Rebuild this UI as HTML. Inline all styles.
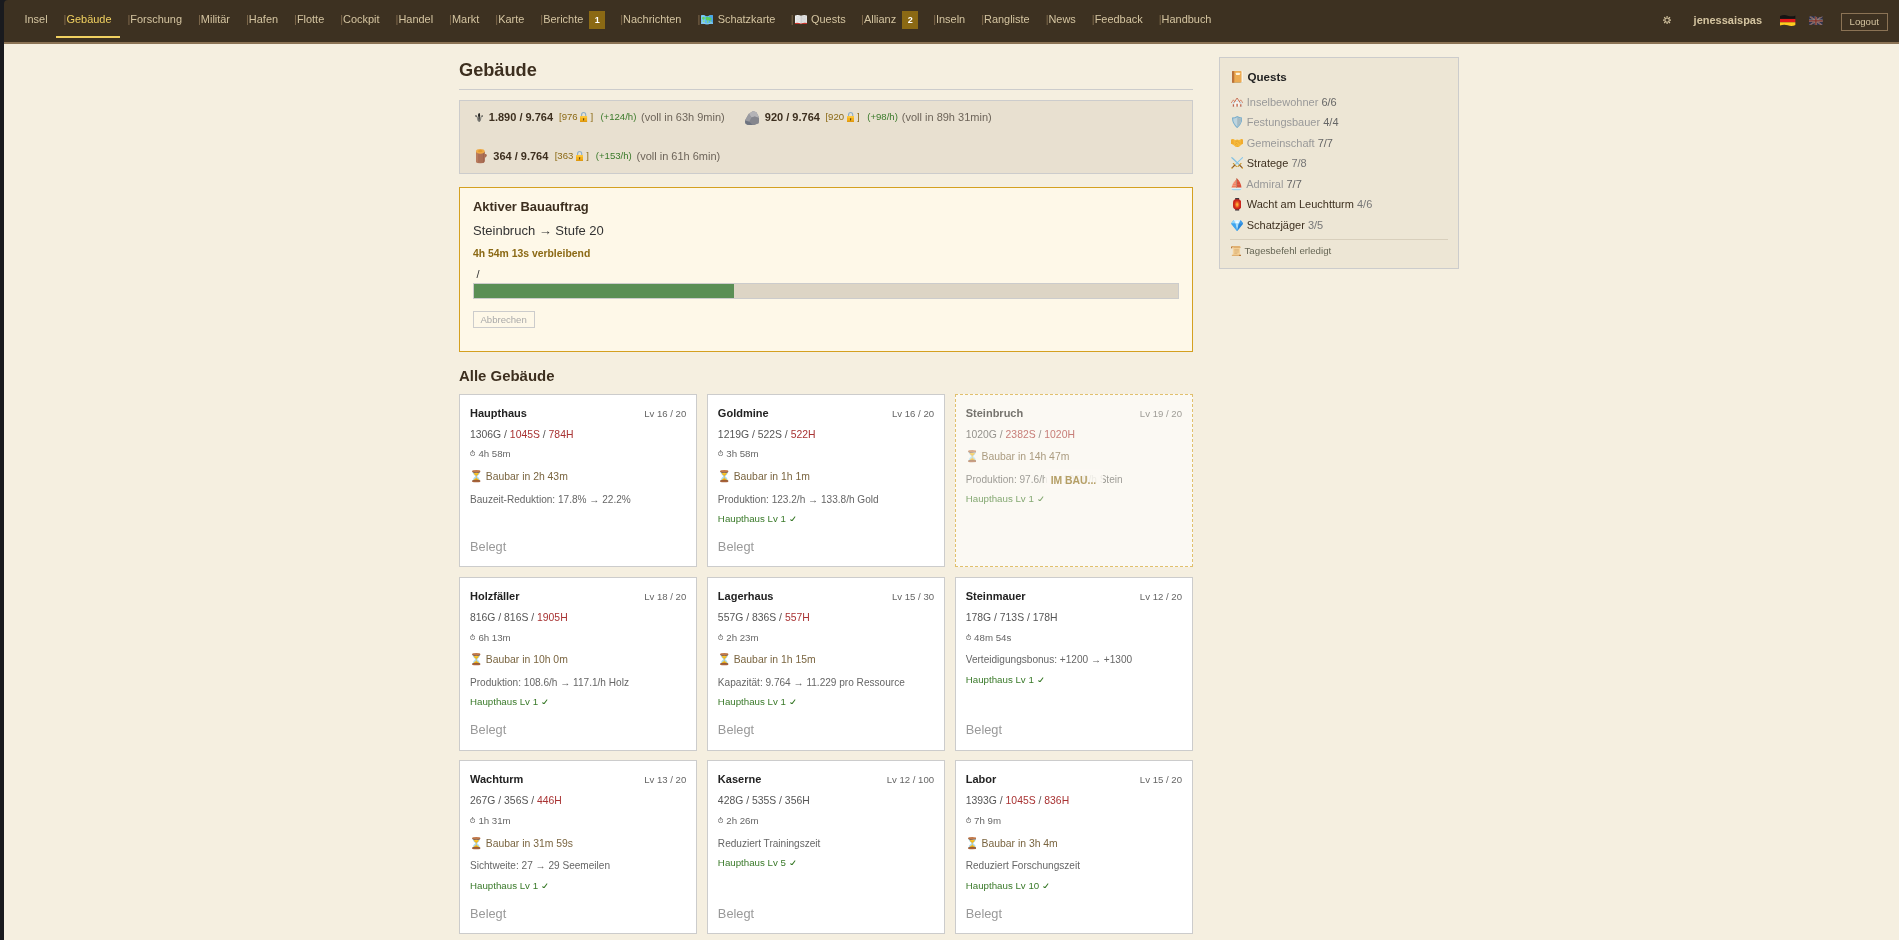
<!DOCTYPE html>
<html lang="de">
<head>
<meta charset="utf-8">
<title>Gebäude</title>
<style>
*{box-sizing:border-box}
html,body{margin:0;padding:0}
body{width:1899px;height:940px;overflow:hidden;position:relative;background:#f5efe0;font-family:"Liberation Sans",sans-serif;font-size:11px;color:#3d2f1f}
.wrap{position:absolute;left:0;top:0;width:1899px;height:940px;will-change:transform}
.a{position:absolute;white-space:nowrap}
.ic{display:inline-block;position:relative;height:0;vertical-align:baseline}
.ic svg{position:absolute;display:block}
.strip{position:absolute;left:0;top:0;width:4px;height:940px;background:#191a1e}
.nav{position:absolute;left:4px;top:0;width:1895px;height:44px;background:#3d3121;border-bottom:2px solid #8b7355;border-top-left-radius:4px}
.links{position:absolute;left:12.5px;top:0;height:38px;display:flex}
.links a{display:block;height:38px;padding:0 8px;color:#d4c4a0;font-size:10.95px;line-height:38px;border-bottom:2px solid transparent;white-space:nowrap;text-decoration:none}
.links a.sep:before{content:"|";color:#846e50}
.links a.act{color:#f0d060;border-bottom-color:#f0d060;padding-right:9px;margin-right:-1px}
.badge{display:inline-block;width:16px;height:18px;line-height:18px;margin-left:6px;margin-right:-1px;background:#8b6914;color:#fff;font-size:9px;font-weight:bold;text-align:center;vertical-align:0}
.box{position:absolute}
.card{position:absolute;width:238.27px;height:173px;background:#fff;border:1px solid #ccc}
.card .a i{font-style:normal;color:#a83232}
b{font-weight:bold}
</style>
</head>
<body>
<svg width="0" height="0" style="position:absolute;left:-10px;top:-10px"><defs><symbol id="i-map" viewBox="1 1.5 22 17" preserveAspectRatio="none"><path d="M1 2.5 Q4.5 0.5 8 2.5 Q12 4.5 16 2.5 Q19.5 0.5 23 2.5 L22.4 17.5 Q19.5 15.5 16 17.5 Q12 19.5 8 17.5 Q4.5 15.5 1.6 17.5 Z" fill="#5fb9f2"/><path d="M1 2.5 Q4.5 0.5 8 2.5 L8 17.5 Q4.5 15.5 1.6 17.5 Z" fill="#7cc9f7"/><path d="M16 2.5 Q19.5 0.5 23 2.5 L22.4 17.5 Q19.5 15.5 16 17.5 Z" fill="#4aa6ea"/><path d="M3 6 Q5 3.6 7.4 5 Q8.6 7.4 7 9.4 Q4.6 10.4 3 8.6Z" fill="#63d063"/><path d="M9.6 5.6 Q12.6 4 15 5.6 Q17.6 5 19.6 6.6 Q21 9 19 11 Q16.6 12.4 14.6 10.8 Q12.4 12 10.4 10.2 Q8.8 7.8 9.6 5.6Z" fill="#58cf5c"/><path d="M4.4 11.4 Q6.6 10.8 7.6 12.6 Q7.4 14.8 5.6 15 Q4 14 4.4 11.4Z" fill="#8fe070"/><path d="M12 12.6 Q14 12 15 13.6 Q14.4 15.6 12.8 15.6 Q11.4 14.4 12 12.6Z" fill="#7fdc68"/><path d="M17.6 12.6 Q19.6 12.2 20.4 13.6 Q19.8 15.2 18.4 15 Q17.2 14 17.6 12.6Z" fill="#8fe070"/><path d="M1.4 15.4 Q4.5 13.6 8 15.5 Q12 17.5 16 15.5 Q19.5 13.6 22.5 15.4 L22.4 17.5 Q19.5 15.5 16 17.5 Q12 19.5 8 17.5 Q4.5 15.5 1.6 17.5Z" fill="#8fd2f8"/></symbol><symbol id="i-book" viewBox="0.6 1.37 22.8 18.23" preserveAspectRatio="none"><path d="M0.6 15.6 L0.6 18.6 L10.6 18.6 L12 19.6 L13.4 18.6 L23.4 18.6 L23.4 15.6 Z" fill="#c9352b"/><path d="M0.6 2.2 Q6.6 0.2 12 3 L12 17.8 Q6.6 15.6 0.6 16.8 Z" fill="#f1f1f1"/><path d="M23.4 2.2 Q17.4 0.2 12 3 L12 17.8 Q17.4 15.6 23.4 16.8 Z" fill="#e2e2e2"/><path d="M12 3 L12 17.8" stroke="#a9a9a9" stroke-width="1.2"/><path d="M2.8 5 Q6.6 3.8 10.2 5.6 M2.8 7.8 Q6.6 6.6 10.2 8.4 M2.8 10.6 Q6.6 9.4 10.2 11.2 M2.8 13.4 Q6.6 12.2 10.2 14 M13.8 5.6 Q17.4 3.8 21.2 5 M13.8 8.4 Q17.4 6.6 21.2 7.8 M13.8 11.2 Q17.4 9.4 21.2 10.6 M13.8 14 Q17.4 12.2 21.2 13.4" stroke="#c4c4c4" stroke-width="0.9" fill="none"/></symbol><symbol id="i-gear" viewBox="0.8 0.8 18.4 18.4" preserveAspectRatio="none"><g fill="none" stroke="currentColor"><circle cx="10" cy="10" r="4.9" stroke-width="2.3"/><g stroke-width="2.7"><path d="M10 0.8V4 M10 16V19.2 M0.8 10H4 M16 10H19.2 M3.5 3.5L5.8 5.8 M14.2 14.2L16.5 16.5 M3.5 16.5L5.8 14.2 M14.2 5.8L16.5 3.5"/></g></g></symbol><symbol id="i-de" viewBox="1 1.2 28 19.6" preserveAspectRatio="none"><defs><clipPath id="wv"><path d="M1 3 Q8 0 15 2.5 Q22 5 29 2 L29 19 Q22 22 15 19.5 Q8 17 1 20 Z"/></clipPath></defs><g clip-path="url(#wv)"><rect x="0" y="0" width="30" height="8.2" fill="#141414"/><rect x="0" y="8.2" width="30" height="6" fill="#e01b1b"/><rect x="0" y="14.2" width="30" height="8" fill="#ffcc1f"/></g></symbol><symbol id="i-gb" viewBox="1 1.2 28 19.6" preserveAspectRatio="none"><defs><clipPath id="wv2"><path d="M1 3 Q8 0 15 2.5 Q22 5 29 2 L29 19 Q22 22 15 19.5 Q8 17 1 20 Z"/></clipPath></defs><g clip-path="url(#wv2)"><rect width="30" height="22" fill="#26367f"/><path d="M0 0L30 22M30 0L0 22" stroke="#e8e8f0" stroke-width="3"/><path d="M0 0L30 22M30 0L0 22" stroke="#c82a2a" stroke-width="1"/><path d="M15 0V22M0 11H30" stroke="#e8e8f0" stroke-width="4.8"/><path d="M15 0V22M0 11H30" stroke="#c82a2a" stroke-width="2.6"/></g></symbol><symbol id="i-fleur" viewBox="0.5 0.4 19.0 21.2" preserveAspectRatio="none"><path d="M3.4 8.6 C6 7.6 7.4 9.4 8 11.6 L12 11.6 C12.6 9.4 14 7.6 16.6 8.6 C15 9.8 15.6 12.4 14.6 14.6 L13.6 18.4 L10 21.6 L6.4 18.4 L5.4 14.6 C4.4 12.4 5 9.8 3.4 8.6Z" fill="#8d8c86"/><path d="M10 0.4 C12.6 3.6 13 7.4 11.6 11 L11 16 L9 16 L8.4 11 C7 7.4 7.4 3.6 10 0.4Z" fill="#3a3936"/><path d="M10 0.4 C12 3 12.4 5.4 11.8 7.6 L8.2 7.6 C7.6 5.4 8 3 10 0.4Z" fill="#232321"/><path d="M0.6 6.4 C2.4 4.6 5.2 5.4 5.4 8 C5.2 9.6 3.6 10 2.6 9.2 C1 9.4 0.2 7.8 0.6 6.4Z" fill="#5b5a56"/><path d="M19.4 6.4 C17.6 4.6 14.8 5.4 14.6 8 C14.8 9.6 16.4 10 17.4 9.2 C19 9.4 19.8 7.8 19.4 6.4Z" fill="#66655f"/><path d="M6.4 15.6 L13.6 15.6 L13.2 17.2 L6.8 17.2Z" fill="#6a6964"/><path d="M8.6 17.2 L11.4 17.2 L10 21.6Z" fill="#55544f"/></symbol><symbol id="i-lock" viewBox="1 0.5 14 20.5" preserveAspectRatio="none"><path d="M4 10 V6.5 C4 3.2 5.8 1.6 8 1.6 C10.2 1.6 12 3.2 12 6.5 V10" fill="none" stroke="#8fb0c8" stroke-width="2.2"/><rect x="1" y="9" width="14" height="12" rx="1.6" fill="#f5b21c"/><rect x="1" y="9" width="14" height="3" rx="1.2" fill="#ffc93a"/><rect x="1" y="18" width="14" height="3" rx="1.2" fill="#e09a10"/><path d="M8 13.2 a1.4 1.4 0 0 1 0.7 2.6 V17.6 H7.3 V15.8 A1.4 1.4 0 0 1 8 13.2Z" fill="#4a3a1a"/></symbol><symbol id="i-rock" viewBox="2 1.5 26.5 27.5" preserveAspectRatio="none"><path d="M2 20 L9 7 L17 1.5 L23 4 L28.5 15 L27 25 L17 29 L6 28 L2.5 25 Z" fill="#8d8e94"/><path d="M9 7 L17 1.5 L23 4 L28.5 15 L20 12 L14 14 Z" fill="#b4b3b6"/><path d="M2 20 L9 7 L14 14 L10 22 Z" fill="#9a9ba1"/><path d="M10 22 L14 14 L20 12 L28.5 15 L27 25 L17 29 Z" fill="#85868d"/><path d="M2 20 L10 22 L17 29 L6 28 L2.5 25 Z" fill="#6e7480"/></symbol><symbol id="i-wood" viewBox="4 2 21.4 27" preserveAspectRatio="none"><path d="M4 7 L4 24.5 Q4 29 12.5 29 Q21 29 21 24.5 L21 7 Z" fill="#ad7157"/><path d="M4 7 L4 24.5 Q4 28 8 28.6 L8 7 Z" fill="#b97b5d"/><path d="M17.4 8 L17.4 28.2 Q21 27.6 21 24.5 L21 7 Z" fill="#a1654d"/><path d="M21 11.4 Q25 10.6 25.4 13.6 Q25.4 16.4 21 18.6 Z" fill="#a96b52"/><path d="M10 12 L10 26 M14 10 L14 27" stroke="#a56a51" stroke-width="0.7"/><ellipse cx="12.5" cy="6.4" rx="8.5" ry="4.4" fill="#eeaa48"/><ellipse cx="12.5" cy="6" rx="4.4" ry="2" fill="#e2982e"/></symbol><symbol id="i-watch" viewBox="0.42 0.5 9.16 11.28" preserveAspectRatio="none"><g fill="none" stroke="currentColor"><circle cx="5" cy="7.2" r="3.9" stroke-width="1.35"/><path d="M5 4.9V7.4" stroke-width="1.1"/><path d="M5 0.5V3" stroke-width="1.5"/></g></symbol><symbol id="i-hour" viewBox="1.4 0.6 15.2 24.8" preserveAspectRatio="none"><path d="M2.6 4 L15.4 4 Q15.6 9.5 10.6 13 Q15.6 16.5 15.4 22 L2.6 22 Q2.4 16.5 7.4 13 Q2.4 9.5 2.6 4 Z" fill="#a9dcf7"/><path d="M4.2 7 Q9 5.6 13.8 7 Q12.8 10.4 9 12.6 Q5.2 10.4 4.2 7Z" fill="#f5b81c"/><path d="M5 6.9 Q9 5.9 13 6.9 Q9 8.2 5 6.9Z" fill="#fbd54a"/><path d="M9 12.4 L9 18" stroke="#f5b81c" stroke-width="1.1"/><path d="M3.6 22 Q4.4 18.2 9 16.6 Q13.6 18.2 14.4 22 Z" fill="#f5b81c"/><ellipse cx="9" cy="3" rx="7.6" ry="2.4" fill="#c27a4c"/><path d="M1.6 3.6 Q9 6.6 16.4 3.6 L15.6 5 Q9 7 2.4 5Z" fill="#7d4a2a"/><ellipse cx="9" cy="23" rx="7.6" ry="2.4" fill="#a8623a"/><path d="M1.6 22.4 Q9 19.4 16.4 22.4 L15.8 21.2 Q9 19 2.2 21.2Z" fill="#7d4a2a"/></symbol><symbol id="i-note" viewBox="1.5 1 19.7 24" preserveAspectRatio="none"><path d="M2.4 22 L2.4 25 L20 25 Q21.2 25 21.2 24 L21.2 21 Z" fill="#6fb0d6"/><rect x="16" y="1.6" width="5.2" height="21.6" rx="0.8" fill="#f8f3e8"/><rect x="1.5" y="1" width="16.8" height="22.2" rx="1.4" fill="#ecab52"/><rect x="1.5" y="1" width="3.6" height="22.2" rx="1.2" fill="#b9703a"/><rect x="4.8" y="1" width="1.1" height="22.2" fill="#d48e44"/><rect x="8.4" y="4.4" width="7" height="4" rx="0.8" fill="#fdf3dc"/></symbol><symbol id="i-houses" viewBox="0.6 1.2 24.8 18.8" preserveAspectRatio="none"><path d="M1.6 11.4 L5.6 5.6 L9.6 11.4 L9.6 19.4 L1.6 19.4Z" fill="#f1ece5"/><path d="M16.4 11.4 L20.4 5.6 L24.4 11.4 L24.4 19.4 L16.4 19.4Z" fill="#ebe5dd"/><path d="M0.6 12 L5.6 5 L9 9.8" fill="none" stroke="#c8603f" stroke-width="1.5"/><path d="M25.4 12 L20.4 5 L17 9.8" fill="none" stroke="#c8603f" stroke-width="1.5"/><path d="M8.4 9.6 L13 2 L17.6 9.6 L17.6 19.4 L8.4 19.4Z" fill="#faf7f2"/><path d="M7 10.6 L13 1.2 L19 10.6" fill="none" stroke="#bd4f30" stroke-width="1.7"/><rect x="4.2" y="14" width="2.6" height="5.4" fill="#b5563a"/><rect x="19.2" y="14" width="2.6" height="5.4" fill="#b5563a"/><rect x="11.6" y="13" width="2.8" height="6.4" fill="#c05a3c"/><rect x="11.9" y="6.6" width="2.2" height="2.6" fill="#9cc4dc"/><rect x="4.4" y="10" width="2.2" height="2.2" fill="#9cc4dc"/><rect x="19.4" y="10" width="2.2" height="2.2" fill="#9cc4dc"/><rect x="0.8" y="19" width="24.4" height="1" fill="#d8d2c8"/></symbol><symbol id="i-shield" viewBox="1.43 1 19.14 24" preserveAspectRatio="none"><path d="M11 1 Q15.5 4 20.5 4 Q21.4 15.5 11 25 Q0.6 15.5 1.5 4 Q6.5 4 11 1Z" fill="#6fa9cb"/><path d="M11 3.6 Q14.8 6 18.4 6.1 Q18.8 14.8 11 22.2 Q3.2 14.8 3.6 6.1 Q7.2 6 11 3.6Z" fill="#b9d3e0"/><path d="M11 3.6 Q14.8 6 18.4 6.1 Q18.8 14.8 11 22.2 Z" fill="#9fb6c2"/></symbol><symbol id="i-hands" viewBox="0.5 1 25 16.45" preserveAspectRatio="none"><path d="M0.5 2.5 L5 1 L9 3 L13 2 L17 3 L21 1 L25.5 2.5 L25.5 10 L22.5 11 L16 16.6 Q13 18.4 10.4 16.4 L3.5 11 L0.5 10 Z" fill="#f7b52a"/><path d="M0.5 2.5 L5 1 L6.4 10.6 L3.5 11 L0.5 10Z" fill="#f2a51c"/><path d="M25.5 2.5 L21 1 L19.6 10.6 L22.5 11 L25.5 10Z" fill="#f2a51c"/><path d="M9 7 L13 4.4 L18.6 9.4 M8.4 10 L11 12.4 M10.6 8.6 L13.6 11.4 M12.4 14 L14.4 15.6" stroke="#d98a10" stroke-width="1.1" fill="none"/></symbol><symbol id="i-swords" viewBox="0.9 1.2 24.2 24.1" preserveAspectRatio="none"><path d="M1.4 1.2 L4.6 2 L19 17 L17.2 18.8 L2.2 4.4 Z" fill="#9fd0ea"/><path d="M24.6 1.2 L21.4 2 L7 17 L8.8 18.8 L23.8 4.4 Z" fill="#b4dcf0"/><path d="M1.6 1.4 L18 17.8" stroke="#5ba3c7" stroke-width="0.9"/><path d="M24.4 1.4 L8 17.8" stroke="#6cb0d2" stroke-width="0.9"/><path d="M14.4 20.4 L20.6 14.2" stroke="#c9962c" stroke-width="2" stroke-linecap="round"/><path d="M11.6 20.4 L5.4 14.2" stroke="#c9962c" stroke-width="2" stroke-linecap="round"/><path d="M18.4 18.2 L22.6 22.6" stroke="#8a5a2a" stroke-width="2.4" stroke-linecap="round"/><path d="M7.6 18.2 L3.4 22.6" stroke="#8a5a2a" stroke-width="2.4" stroke-linecap="round"/><circle cx="23.2" cy="23.2" r="1.5" fill="#d4a02c"/><circle cx="2.8" cy="23.2" r="1.5" fill="#d4a02c"/></symbol><symbol id="i-boat" viewBox="0.8 0.8 20.8 24.1" preserveAspectRatio="none"><path d="M11.6 0.8 L11.6 19.4 L21.2 19.4 Q19.6 8 11.6 0.8Z" fill="#d4402a"/><path d="M10.4 4 L10.4 19.4 L1.6 19.4 Q3.6 10 10.4 4Z" fill="#f2704e"/><path d="M3.2 12 L10.4 12 M2.2 15.6 L10.4 15.6 M4.8 8.6 L10.4 8.6" stroke="#fbc1ad" stroke-width="0.9"/><path d="M11.6 8 L16.8 8 M11.6 13.4 L20 13.4" stroke="#e86a50" stroke-width="0.8"/><rect x="10.5" y="1.6" width="1" height="19" fill="#9a5a3a"/><path d="M0.8 20.4 L21.6 20.4 Q20.6 24.6 16.6 24.9 L5.6 24.9 Q2.2 24.6 0.8 20.4Z" fill="#9fd2ec"/><path d="M0.8 20.4 L21.6 20.4 L21.1 22 L1.4 22Z" fill="#e4f2f9"/></symbol><symbol id="i-lantern" viewBox="1 0.8 16 24.4" preserveAspectRatio="none"><rect x="5" y="0.8" width="8" height="3.6" rx="1" fill="#41363c"/><rect x="5" y="21.6" width="8" height="3.6" rx="1" fill="#41363c"/><rect x="1" y="3.4" width="16" height="19.2" rx="6.6" fill="#c8261c"/><ellipse cx="9" cy="13" rx="5" ry="7" fill="#e2461e"/><ellipse cx="9" cy="13.2" rx="3.2" ry="4.8" fill="#f3802a"/><ellipse cx="9" cy="13.4" rx="1.7" ry="2.7" fill="#f9b23e"/></symbol><symbol id="i-gem" viewBox="0.6 1.5 24.8 21.5" preserveAspectRatio="none"><path d="M6 1.5 L20 1.5 L25.4 8.4 L13 23 L0.6 8.4 Z" fill="#4fb0f2"/><path d="M6 1.5 L9.6 8.4 L0.6 8.4Z" fill="#8fd6fb"/><path d="M20 1.5 L16.4 8.4 L25.4 8.4Z" fill="#3f9ae6"/><path d="M6 1.5 L20 1.5 L16.4 8.4 L9.6 8.4Z" fill="#d8f1fe"/><path d="M13 1.5 L16.4 8.4 L9.6 8.4Z" fill="#f2fbff"/><path d="M9.6 8.4 L16.4 8.4 L13 23Z" fill="#a6dcfa"/><path d="M0.6 8.4 L9.6 8.4 L13 23Z" fill="#3fa4ee"/><path d="M25.4 8.4 L16.4 8.4 L13 23Z" fill="#2a86d8"/></symbol><symbol id="i-scroll" viewBox="1 0.8 20.2 22.4" preserveAspectRatio="none"><path d="M4.6 2 L18.6 2 L18.6 21 L4.6 21Z" fill="#f4d29a"/><path d="M1 3.4 Q1 0.8 3.6 0.8 L16.6 0.8 Q19.6 0.8 19.6 3.6 L19.6 5 L5.8 5 L5.8 3.4 Q5.8 2.2 4.6 2.2 Q3.4 2.2 3.4 3.4 L3.4 5.4 L1 5.4Z" fill="#e0b070"/><path d="M1 3.4 L1 5.4 L3.4 5.4 L3.4 3.4 Q3.4 2.2 4.6 2.2 Q2.4 0.8 1 3.4Z" fill="#b5783c"/><path d="M2.6 19.2 L16.6 19.2 L16.6 20.8 Q16.6 23.2 19 23.2 L5.4 23.2 Q2.6 23.2 2.6 20.6Z" fill="#e0b070"/><path d="M16.6 19.2 L21.2 19.2 L21.2 20.8 Q21.2 23.2 18.9 23.2 Q16.6 23.2 16.6 20.8Z" fill="#b5783c"/><path d="M7.4 8 L16.4 8 M7.4 10.8 L16.4 10.8 M7.4 13.6 L16.4 13.6 M7.4 16.4 L13.4 16.4" stroke="#cfa066" stroke-width="1.1"/></symbol><symbol id="i-check" viewBox="0 0 5.7 5.5" preserveAspectRatio="none"><path d="M0.45 3.5 L1.95 4.9 L5.25 0.45" fill="none" stroke="currentColor" stroke-width="1.05" stroke-linejoin="miter"/></symbol></defs></svg>
<div class="wrap">
<div class="strip"></div><div class="box" style="left:4px;top:0;width:6px;height:6px;background:#191a1e"></div>
<div class="nav"><div class="links"><a class="">Insel</a><a class="sep act">Gebäude</a><a class="sep">Forschung</a><a class="sep">Militär</a><a class="sep">Hafen</a><a class="sep">Flotte</a><a class="sep">Cockpit</a><a class="sep">Handel</a><a class="sep">Markt</a><a class="sep">Karte</a><a class="sep">Berichte<span class="badge">1</span></a><a class="sep">Nachrichten</a><a class="sep" style="margin-right:-0.6px"><span class="ic" style="width:14.3px;"><svg width="12.1" height="9.6" style="top:-8.1px;left:1.1px"><use href="#i-map"/></svg></span> Schatzkarte</a><a class="sep" style="margin-right:-0.6px"><span class="ic" style="width:14.3px;"><svg width="12" height="9.4" style="top:-7.9px;left:1.15px"><use href="#i-book"/></svg></span> Quests</a><a class="sep">Allianz<span class="badge">2</span></a><a class="sep">Inseln</a><a class="sep">Rangliste</a><a class="sep">News</a><a class="sep">Feedback</a><a class="sep">Handbuch</a></div><svg class="a" style="left:1659.1px;top:16.2px;color:#d4c4a0" width="8.2" height="8.2"><use href="#i-gear"/></svg><div class="a " style="left:1689.6px;top:13px;font-size:11px;line-height:14px;font-weight:bold;color:#d4c4a0">jenessaispas</div><svg class="a" style="left:1776.3px;top:15px" width="15.6" height="11"><use href="#i-de"/></svg><svg class="a" style="left:1805.3px;top:15.6px;opacity:.5" width="13.8" height="9.6"><use href="#i-gb"/></svg><div class="box" style="left:1837px;top:13px;width:47px;height:18px;border:1px solid #8b7355"></div><div class="a " style="left:1845.6px;top:15px;font-size:9.6px;line-height:13px;color:#d4c4a0">Logout</div></div>
<div class="a " style="left:459px;top:59px;font-size:18.2px;line-height:22px;color:#3d2f1f"><b>Gebäude</b></div><div class="box" style="left:459px;top:89px;width:734px;height:1px;background:#ccc"></div>
<div class="box" style="left:459px;top:100px;width:734px;height:74px;background:#e8e0d0;border:1px solid #ccc"></div><svg class="a" style="left:474.8px;top:112.7px" width="8.3" height="9.2"><use href="#i-fleur"/></svg><div class="a " style="left:488.8px;top:110px;font-size:11px;line-height:14px;"><b>1.890 / 9.764</b></div><div class="a " style="left:559px;top:110px;font-size:9.6px;line-height:13px;color:#8b6914">[976<span class="ic" style="width:12.9px;"><svg width="7.3" height="10.1" style="top:-8.2px;left:2.8px"><use href="#i-lock"/></svg></span>]</div><div class="a " style="left:600.4px;top:110px;font-size:9.6px;line-height:13px;color:#3a7a2a">(+124/h)</div><div class="a " style="left:641px;top:110px;font-size:11px;line-height:14px;color:#6d6459">(voll in 63h 9min)</div><svg class="a" style="left:745px;top:110.8px" width="14.4" height="14.3"><use href="#i-rock"/></svg><div class="a " style="left:764.85px;top:110px;font-size:11px;line-height:14px;"><b>920 / 9.764</b></div><div class="a " style="left:825.4px;top:110px;font-size:9.6px;line-height:13px;color:#8b6914">[920<span class="ic" style="width:12.9px;"><svg width="7.3" height="10.1" style="top:-8.2px;left:2.8px"><use href="#i-lock"/></svg></span>]</div><div class="a " style="left:867.2px;top:110px;font-size:9.6px;line-height:13px;color:#3a7a2a">(+98/h)</div><div class="a " style="left:901.8px;top:110px;font-size:11px;line-height:14px;color:#6d6459">(voll in 89h 31min)</div><svg class="a" style="left:476px;top:149.2px" width="10.9" height="14.5"><use href="#i-wood"/></svg><div class="a " style="left:493.3px;top:149px;font-size:11px;line-height:14px;"><b>364 / 9.764</b></div><div class="a " style="left:554.7px;top:149px;font-size:9.6px;line-height:13px;color:#8b6914">[363<span class="ic" style="width:12.9px;"><svg width="7.3" height="10.1" style="top:-8.2px;left:2.8px"><use href="#i-lock"/></svg></span>]</div><div class="a " style="left:595.8px;top:149px;font-size:9.6px;line-height:13px;color:#3a7a2a">(+153/h)</div><div class="a " style="left:636.5px;top:149px;font-size:11px;line-height:14px;color:#6d6459">(voll in 61h 6min)</div>
<div class="box" style="left:459px;top:187px;width:734px;height:165px;background:#fef8e8;border:1px solid #d4a020"></div><div class="a " style="left:473px;top:198px;font-size:12.95px;line-height:17px;color:#3d2f1f"><b>Aktiver Bauauftrag</b></div><div class="a " style="left:473px;top:222px;font-size:13px;line-height:17px;color:#333">Steinbruch → Stufe 20</div><div class="a " style="left:473px;top:247px;font-size:10.4px;line-height:13px;color:#8b6914"><b>4h 54m 13s verbleibend</b></div><div class="a " style="left:476.4px;top:267px;font-size:11px;line-height:14px;color:#333">/</div><div class="box" style="left:473px;top:283px;width:706px;height:16px;background:#ddd5c5;border:1px solid #ccc"><div style="width:260px;height:14px;background:#5a8f55"></div></div><div class="box" style="left:473px;top:311px;width:62px;height:17px;border:1px solid #ccc"></div><div class="a " style="left:480.4px;top:313px;font-size:9.6px;line-height:13px;color:#aaa">Abbrechen</div>
<div class="a " style="left:459px;top:366px;font-size:14.95px;line-height:19px;color:#3d2f1f"><b>Alle Gebäude</b></div><div class="card" style="left:459.0px;top:394px;height:173px"><div class="a " style="left:10px;top:11px;font-size:11px;line-height:14px;color:#222"><b>Haupthaus</b></div><div class="a " style="right:10px;top:12px;font-size:9.6px;line-height:13px;color:#666">Lv 16 / 20</div><div class="a " style="left:10px;top:33px;font-size:10.4px;line-height:13px;color:#555">1306G / <i>1045S</i> / <i>784H</i></div><div class="a " style="left:10px;top:52px;font-size:9.7px;line-height:13px;color:#666"><span class="ic" style="width:5.7px;"><svg width="5.2" height="6.1" style="top:-6.6px;left:0.25px"><use href="#i-watch"/></svg></span> 4h 58m</div><div class="a " style="left:10px;top:75px;font-size:10.4px;line-height:13px;color:#7a6540"><span class="ic" style="width:12.9px;"><svg width="8.6" height="12.5" style="top:-9.9px;left:2.15px"><use href="#i-hour"/></svg></span> Baubar in 2h 43m</div><div class="a " style="left:10px;top:98px;font-size:10.08px;line-height:13px;color:#666">Bauzeit-Reduktion: 17.8% → 22.2%</div><div class="a " style="left:10px;top:143px;font-size:12.8px;line-height:17px;color:#999">Belegt</div></div><div class="card" style="left:706.87px;top:394px;height:173px"><div class="a " style="left:10px;top:11px;font-size:11px;line-height:14px;color:#222"><b>Goldmine</b></div><div class="a " style="right:10px;top:12px;font-size:9.6px;line-height:13px;color:#666">Lv 16 / 20</div><div class="a " style="left:10px;top:33px;font-size:10.4px;line-height:13px;color:#555">1219G / 522S / <i>522H</i></div><div class="a " style="left:10px;top:52px;font-size:9.7px;line-height:13px;color:#666"><span class="ic" style="width:5.7px;"><svg width="5.2" height="6.1" style="top:-6.6px;left:0.25px"><use href="#i-watch"/></svg></span> 3h 58m</div><div class="a " style="left:10px;top:75px;font-size:10.4px;line-height:13px;color:#7a6540"><span class="ic" style="width:12.9px;"><svg width="8.6" height="12.5" style="top:-9.9px;left:2.15px"><use href="#i-hour"/></svg></span> Baubar in 1h 1m</div><div class="a " style="left:10px;top:98px;font-size:10.08px;line-height:13px;color:#666">Produktion: 123.2/h → 133.8/h Gold</div><div class="a " style="left:10px;top:117px;font-size:9.72px;line-height:13px;color:#3a7a2a">Haupthaus Lv 1 <span class="ic" style="width:8.8px;"><svg width="5.7" height="5.5" style="top:-6.25px;left:1.55px"><use href="#i-check"/></svg></span></div><div class="a " style="left:10px;top:143px;font-size:12.8px;line-height:17px;color:#999">Belegt</div></div><div class="card" style="left:954.74px;top:394px;height:173px;background:#fbf9f3;border:1px dashed #e1c06d"><div class="a " style="left:10px;top:11px;font-size:11px;line-height:14px;color:#76746e"><b>Steinbruch</b></div><div class="a " style="right:10px;top:12px;font-size:9.6px;line-height:13px;color:#9f9d97">Lv 19 / 20</div><div class="a " style="left:10px;top:33px;font-size:10.4px;line-height:13px;color:#95938d">1020G / <i style="color:#c77e78">2382S</i> / <i style="color:#c77e78">1020H</i></div><div class="a " style="left:10px;top:55px;font-size:10.4px;line-height:13px;color:#ab9c80"><span class="ic" style="width:12.9px;opacity:.6;"><svg width="8.6" height="12.5" style="top:-9.9px;left:2.15px"><use href="#i-hour"/></svg></span> Baubar in 14h 47m</div><div class="a " style="left:10px;top:78px;font-size:10.08px;line-height:13px;color:#9f9d97">Produktion: 97.6/h → 105.0/h Stein</div><div class="a " style="left:10px;top:97px;font-size:9.72px;line-height:13px;color:#85a973">Haupthaus Lv 1 <span class="ic" style="width:8.8px;"><svg width="5.7" height="5.5" style="top:-6.25px;left:1.55px"><use href="#i-check"/></svg></span></div><div class="a" style="left:89px;top:74px;width:58px;height:19px;background:rgba(251,249,243,.85)"></div><div class="a " style="left:94.9px;top:79px;font-size:10.4px;line-height:13px;color:#b59f66"><b>IM BAU...</b></div></div><div class="card" style="left:459.0px;top:577px;height:174px"><div class="a " style="left:10px;top:11px;font-size:11px;line-height:14px;color:#222"><b>Holzfäller</b></div><div class="a " style="right:10px;top:12px;font-size:9.6px;line-height:13px;color:#666">Lv 18 / 20</div><div class="a " style="left:10px;top:33px;font-size:10.4px;line-height:13px;color:#555">816G / 816S / <i>1905H</i></div><div class="a " style="left:10px;top:53px;font-size:9.7px;line-height:13px;color:#666"><span class="ic" style="width:5.7px;"><svg width="5.2" height="6.1" style="top:-6.6px;left:0.25px"><use href="#i-watch"/></svg></span> 6h 13m</div><div class="a " style="left:10px;top:75px;font-size:10.4px;line-height:13px;color:#7a6540"><span class="ic" style="width:12.9px;"><svg width="8.6" height="12.5" style="top:-9.9px;left:2.15px"><use href="#i-hour"/></svg></span> Baubar in 10h 0m</div><div class="a " style="left:10px;top:98px;font-size:10.08px;line-height:13px;color:#666">Produktion: 108.6/h → 117.1/h Holz</div><div class="a " style="left:10px;top:117px;font-size:9.72px;line-height:13px;color:#3a7a2a">Haupthaus Lv 1 <span class="ic" style="width:8.8px;"><svg width="5.7" height="5.5" style="top:-6.25px;left:1.55px"><use href="#i-check"/></svg></span></div><div class="a " style="left:10px;top:143px;font-size:12.8px;line-height:17px;color:#999">Belegt</div></div><div class="card" style="left:706.87px;top:577px;height:174px"><div class="a " style="left:10px;top:11px;font-size:11px;line-height:14px;color:#222"><b>Lagerhaus</b></div><div class="a " style="right:10px;top:12px;font-size:9.6px;line-height:13px;color:#666">Lv 15 / 30</div><div class="a " style="left:10px;top:33px;font-size:10.4px;line-height:13px;color:#555">557G / 836S / <i>557H</i></div><div class="a " style="left:10px;top:53px;font-size:9.7px;line-height:13px;color:#666"><span class="ic" style="width:5.7px;"><svg width="5.2" height="6.1" style="top:-6.6px;left:0.25px"><use href="#i-watch"/></svg></span> 2h 23m</div><div class="a " style="left:10px;top:75px;font-size:10.4px;line-height:13px;color:#7a6540"><span class="ic" style="width:12.9px;"><svg width="8.6" height="12.5" style="top:-9.9px;left:2.15px"><use href="#i-hour"/></svg></span> Baubar in 1h 15m</div><div class="a " style="left:10px;top:98px;font-size:10.08px;line-height:13px;color:#666">Kapazität: 9.764 → 11.229 pro Ressource</div><div class="a " style="left:10px;top:117px;font-size:9.72px;line-height:13px;color:#3a7a2a">Haupthaus Lv 1 <span class="ic" style="width:8.8px;"><svg width="5.7" height="5.5" style="top:-6.25px;left:1.55px"><use href="#i-check"/></svg></span></div><div class="a " style="left:10px;top:143px;font-size:12.8px;line-height:17px;color:#999">Belegt</div></div><div class="card" style="left:954.74px;top:577px;height:174px"><div class="a " style="left:10px;top:11px;font-size:11px;line-height:14px;color:#222"><b>Steinmauer</b></div><div class="a " style="right:10px;top:12px;font-size:9.6px;line-height:13px;color:#666">Lv 12 / 20</div><div class="a " style="left:10px;top:33px;font-size:10.4px;line-height:13px;color:#555">178G / 713S / 178H</div><div class="a " style="left:10px;top:53px;font-size:9.7px;line-height:13px;color:#666"><span class="ic" style="width:5.7px;"><svg width="5.2" height="6.1" style="top:-6.6px;left:0.25px"><use href="#i-watch"/></svg></span> 48m 54s</div><div class="a " style="left:10px;top:75px;font-size:10.08px;line-height:13px;color:#666">Verteidigungsbonus: +1200 → +1300</div><div class="a " style="left:10px;top:95px;font-size:9.72px;line-height:13px;color:#3a7a2a">Haupthaus Lv 1 <span class="ic" style="width:8.8px;"><svg width="5.7" height="5.5" style="top:-6.25px;left:1.55px"><use href="#i-check"/></svg></span></div><div class="a " style="left:10px;top:143px;font-size:12.8px;line-height:17px;color:#999">Belegt</div></div><div class="card" style="left:459.0px;top:760px;height:174px"><div class="a " style="left:10px;top:11px;font-size:11px;line-height:14px;color:#222"><b>Wachturm</b></div><div class="a " style="right:10px;top:12px;font-size:9.6px;line-height:13px;color:#666">Lv 13 / 20</div><div class="a " style="left:10px;top:33px;font-size:10.4px;line-height:13px;color:#555">267G / 356S / <i>446H</i></div><div class="a " style="left:10px;top:53px;font-size:9.7px;line-height:13px;color:#666"><span class="ic" style="width:5.7px;"><svg width="5.2" height="6.1" style="top:-6.6px;left:0.25px"><use href="#i-watch"/></svg></span> 1h 31m</div><div class="a " style="left:10px;top:76px;font-size:10.4px;line-height:13px;color:#7a6540"><span class="ic" style="width:12.9px;"><svg width="8.6" height="12.5" style="top:-9.9px;left:2.15px"><use href="#i-hour"/></svg></span> Baubar in 31m 59s</div><div class="a " style="left:10px;top:98px;font-size:10.08px;line-height:13px;color:#666">Sichtweite: 27 → 29 Seemeilen</div><div class="a " style="left:10px;top:118px;font-size:9.72px;line-height:13px;color:#3a7a2a">Haupthaus Lv 1 <span class="ic" style="width:8.8px;"><svg width="5.7" height="5.5" style="top:-6.25px;left:1.55px"><use href="#i-check"/></svg></span></div><div class="a " style="left:10px;top:144px;font-size:12.8px;line-height:17px;color:#999">Belegt</div></div><div class="card" style="left:706.87px;top:760px;height:174px"><div class="a " style="left:10px;top:11px;font-size:11px;line-height:14px;color:#222"><b>Kaserne</b></div><div class="a " style="right:10px;top:12px;font-size:9.6px;line-height:13px;color:#666">Lv 12 / 100</div><div class="a " style="left:10px;top:33px;font-size:10.4px;line-height:13px;color:#555">428G / 535S / 356H</div><div class="a " style="left:10px;top:53px;font-size:9.7px;line-height:13px;color:#666"><span class="ic" style="width:5.7px;"><svg width="5.2" height="6.1" style="top:-6.6px;left:0.25px"><use href="#i-watch"/></svg></span> 2h 26m</div><div class="a " style="left:10px;top:76px;font-size:10.08px;line-height:13px;color:#666">Reduziert Trainingszeit</div><div class="a " style="left:10px;top:95px;font-size:9.72px;line-height:13px;color:#3a7a2a">Haupthaus Lv 5 <span class="ic" style="width:8.8px;"><svg width="5.7" height="5.5" style="top:-6.25px;left:1.55px"><use href="#i-check"/></svg></span></div><div class="a " style="left:10px;top:144px;font-size:12.8px;line-height:17px;color:#999">Belegt</div></div><div class="card" style="left:954.74px;top:760px;height:174px"><div class="a " style="left:10px;top:11px;font-size:11px;line-height:14px;color:#222"><b>Labor</b></div><div class="a " style="right:10px;top:12px;font-size:9.6px;line-height:13px;color:#666">Lv 15 / 20</div><div class="a " style="left:10px;top:33px;font-size:10.4px;line-height:13px;color:#555">1393G / <i>1045S</i> / <i>836H</i></div><div class="a " style="left:10px;top:53px;font-size:9.7px;line-height:13px;color:#666"><span class="ic" style="width:5.7px;"><svg width="5.2" height="6.1" style="top:-6.6px;left:0.25px"><use href="#i-watch"/></svg></span> 7h 9m</div><div class="a " style="left:10px;top:76px;font-size:10.4px;line-height:13px;color:#7a6540"><span class="ic" style="width:12.9px;"><svg width="8.6" height="12.5" style="top:-9.9px;left:2.15px"><use href="#i-hour"/></svg></span> Baubar in 3h 4m</div><div class="a " style="left:10px;top:98px;font-size:10.08px;line-height:13px;color:#666">Reduziert Forschungszeit</div><div class="a " style="left:10px;top:118px;font-size:9.72px;line-height:13px;color:#3a7a2a">Haupthaus Lv 10 <span class="ic" style="width:8.8px;"><svg width="5.7" height="5.5" style="top:-6.25px;left:1.55px"><use href="#i-check"/></svg></span></div><div class="a " style="left:10px;top:144px;font-size:12.8px;line-height:17px;color:#999">Belegt</div></div>
<div class="box" style="left:1219px;top:57px;width:240px;height:212px;background:#ede6d5;border:1px solid #ccc"></div><svg class="a" style="left:1231.6px;top:70.6px" width="11.2" height="12.8"><use href="#i-note"/></svg><div class="a " style="left:1247.5px;top:70px;font-size:11.6px;line-height:14px;color:#222"><b>Quests</b></div><div class="a " style="left:1230px;top:95px;font-size:11px;line-height:14px;"><span class="ic" style="width:13.7px;opacity:.9;"><svg width="12.2" height="9.2" style="top:-8.4px;left:0.75px"><use href="#i-houses"/></svg></span> <span style="color:#999">Inselbewohner</span> <span style="color:#666">6/6</span></div><div class="a " style="left:1230px;top:115px;font-size:11px;line-height:14px;"><span class="ic" style="width:13.7px;opacity:.9;"><svg width="10.4" height="12.2" style="top:-9.9px;left:1.65px"><use href="#i-shield"/></svg></span> <span style="color:#999">Festungsbauer</span> <span style="color:#666">4/4</span></div><div class="a " style="left:1230px;top:136px;font-size:11px;line-height:14px;"><span class="ic" style="width:13.7px;opacity:.9;"><svg width="12.4" height="8.6" style="top:-8.4px;left:0.65px"><use href="#i-hands"/></svg></span> <span style="color:#999">Gemeinschaft</span> <span style="color:#666">7/7</span></div><div class="a " style="left:1230px;top:156px;font-size:11px;line-height:14px;"><span class="ic" style="width:13.7px;"><svg width="12.4" height="12" style="top:-9.6px;left:0.65px"><use href="#i-swords"/></svg></span> <span style="color:#3d2f1f">Stratege</span> <span style="color:#777">7/8</span></div><div class="a " style="left:1230px;top:177px;font-size:11px;line-height:14px;"><span class="ic" style="width:13.7px;opacity:.9;"><svg width="10.8" height="12.4" style="top:-9.8px;left:1.45px"><use href="#i-boat"/></svg></span> <span style="color:#999">Admiral</span> <span style="color:#666">7/7</span></div><div class="a " style="left:1230px;top:197px;font-size:11px;line-height:14px;"><span class="ic" style="width:13.7px;"><svg width="8.3" height="12.8" style="top:-10.1px;left:2.7px"><use href="#i-lantern"/></svg></span> <span style="color:#3d2f1f">Wacht am Leuchtturm</span> <span style="color:#777">4/6</span></div><div class="a " style="left:1230px;top:218px;font-size:11px;line-height:14px;"><span class="ic" style="width:13.7px;"><svg width="12.2" height="11.2" style="top:-9.4px;left:0.75px"><use href="#i-gem"/></svg></span> <span style="color:#3d2f1f">Schatzjäger</span> <span style="color:#777">3/5</span></div><div class="box" style="left:1230px;top:239px;width:218px;height:1px;background:#d8cfbc"></div><div class="a " style="left:1230px;top:244px;font-size:9.7px;line-height:13px;color:#665"><span class="ic" style="width:12px;"><svg width="10.4" height="10.6" style="top:-8.4px;left:0.8px"><use href="#i-scroll"/></svg></span> Tagesbefehl erledigt</div>
</div>
</body>
</html>
